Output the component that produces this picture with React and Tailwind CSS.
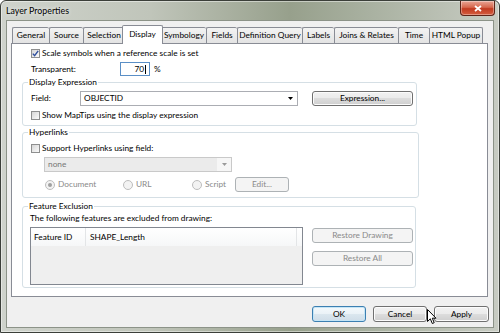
import React from "react";

const font = "font-['Lato',sans-serif]";

function Checkbox({ checked }) {
  return (
    <span className="flex h-[9px] w-[9px] shrink-0 items-center justify-center border border-[#8e8f8f] bg-[linear-gradient(135deg,#d6d6d6,#fbfbfb)]">
      {checked && (
        <svg width="7" height="7" viewBox="0 0 7 7">
          <path d="M0.8 3.6 L2.6 5.6 L6.2 0.8" fill="none" stroke="#2f4f9e" strokeWidth="1.4" />
        </svg>
      )}
    </span>
  );
}

function Radio({ checked }) {
  return (
    <span className="flex h-[10px] w-[10px] shrink-0 items-center justify-center rounded-full border border-[#bdbdbd] bg-[#f3f3f3]">
      {checked && <span className="h-[4px] w-[4px] rounded-full bg-[#a0a0a0]" />}
    </span>
  );
}

const btnBase =
  "flex items-center justify-center rounded-[3px] border border-[#707070] bg-[linear-gradient(#f2f2f2_0%,#ebebeb_50%,#dddddd_50%,#cfcfcf_100%)] shadow-[inset_0_0_0_1px_#fcfcfc]";
const btnDisabled =
  "flex items-center justify-center rounded-[3px] border border-[#adb2b5] bg-[#f4f4f4] text-[#8a8a8a]";

const tabs = [
  { label: "General", w: "w-[37px]" },
  { label: "Source", w: "w-[34px]" },
  { label: "Selection", w: "w-[41px]" },
  { label: "Display", w: "w-[41px]", sel: true },
  { label: "Symbology", w: "w-[45px]" },
  { label: "Fields", w: "w-[31px]" },
  { label: "Definition Query", w: "w-[65px]" },
  { label: "Labels", w: "w-[32px]" },
  { label: "Joins & Relates", w: "w-[64px]" },
  { label: "Time", w: "w-[31px]" },
  { label: "HTML Popup", w: "w-[54px]" },
];

export default function App() {
  return (
    <div className={`${font} relative h-[333px] w-[500px] overflow-hidden bg-white text-[8.3px] leading-none text-black`}>
      <div className="flex h-full w-full flex-col rounded-t-[6px] border border-[#3b3f39] bg-[linear-gradient(90deg,#cfd3cc_0%,#c0c5ba_30%,#97a08c_58%,#aab2a2_75%,#c8ccc3_100%)] shadow-[inset_0_0_0_1px_rgba(255,255,255,0.45)]">
        {/* title bar */}
        <div className="flex h-[20px] shrink-0 items-start justify-between">
          <span className="ml-[5px] mt-[6px] text-[8.8px] [text-shadow:0_0_4px_#fff]">Layer Properties</span>
          <div className="mr-[4px] flex h-[15px] w-[35px] items-center justify-center rounded-b-[4px] border border-t-0 border-[#5e2418] bg-[linear-gradient(#e9a595_0%,#d6684e_45%,#c13a20_55%,#d55e40_100%)] shadow-[inset_0_0_0_1px_rgba(255,255,255,0.35)]">
            <svg width="8" height="7" viewBox="0 0 8 7">
              <path d="M1 1 L7 6 M7 1 L1 6" stroke="white" strokeWidth="1.8" />
            </svg>
          </div>
        </div>

        {/* client area */}
        <div className="ml-[6px] flex h-[306px] w-[486px] shrink-0 flex-col bg-[#f0f0f0] shadow-[0_0_0_1px_#8c9388]">
          {/* tab row */}
          <div className="flex h-[22px] shrink-0 items-end pl-[5px]">
            {tabs.map((t, i) =>
              t.sel ? (
                <div
                  key={t.label}
                  className={`relative z-10 -mx-[2px] mb-[-1px] flex h-[19px] ${t.w} items-center justify-center rounded-t-[2px] border border-b-0 border-[#898c95] bg-white pb-[1px]`}
                >
                  {t.label}
                </div>
              ) : (
                <div
                  key={t.label}
                  className={`flex h-[16px] ${t.w} items-center justify-center rounded-t-[2px] border-t border-l ${
                    i === tabs.length - 1 ? "border-r" : ""
                  } border-[#898c95] bg-[linear-gradient(#f3f3f3,#e3e3e3)]`}
                >
                  {t.label}
                </div>
              )
            )}
          </div>

          {/* tab panel */}
          <div className="ml-[4px] flex h-[254px] w-[477px] shrink-0 flex-col border border-[#898c95] bg-white pl-[10px]">
            {/* scale symbols */}
            <div className="ml-[9px] mt-[3px] flex h-[12px] items-center gap-[2px]">
              <Checkbox checked />
              <span>Scale symbols when a reference scale is set</span>
            </div>
            {/* transparent */}
            <div className="ml-[9px] mt-[3px] flex h-[14px] items-center">
              <span className="w-[89px]">Transparent:</span>
              <div className="flex h-[14px] w-[30px] items-center justify-end border border-[#5b8fc6] pr-[3px]">
                <span>70</span>
                <span className="ml-[1px] h-[9px] w-px bg-black" />
              </div>
              <span className="ml-[4px]">%</span>
            </div>

            {/* Display Expression */}
            <fieldset className="w-[395px] rounded-[3px] border border-[#d5dfe5] p-0">
              <legend className="ml-[5px] px-[1px] leading-[12px]">Display Expression</legend>
              <div className="flex flex-col pb-[4px] pl-[8px] pt-[3px]">
                <div className="flex h-[15px] items-center">
                  <span className="w-[49px]">Field:</span>
                  <div className="flex h-[15px] w-[218px] items-center justify-between border border-[#abadb3] bg-white pl-[3px] pr-[4px]">
                    <span>OBJECTID</span>
                    <svg width="5" height="3" viewBox="0 0 5 3">
                      <path d="M0 0 H5 L2.5 3 Z" fill="#000" />
                    </svg>
                  </div>
                  <div className={`${btnBase} ml-[14px] h-[15px] w-[101px]`}>Expression...</div>
                </div>
                <div className="mt-[3px] flex h-[12px] items-center gap-[2px]">
                  <Checkbox />
                  <span>Show MapTips using the display expression</span>
                </div>
              </div>
            </fieldset>

            {/* Hyperlinks */}
            <fieldset className="w-[397px] rounded-[3px] border border-[#d5dfe5] p-0">
              <legend className="ml-[5px] px-[1px] leading-[12px]">Hyperlinks</legend>
              <div className="flex flex-col pb-[5px] pl-[8px] pt-[4px]">
                <div className="flex h-[12px] items-center gap-[2px]">
                  <Checkbox />
                  <span>Support Hyperlinks using field:</span>
                </div>
                <div className="ml-[13px] mt-[3px] flex h-[15px] w-[188px] items-center border border-[#c9c9c9] bg-[#ebebeb]">
                  <span className="flex-1 pl-[3px] text-[#777]">none</span>
                  <div className="flex h-full w-[14px] items-center justify-center bg-[#f6f6f6]">
                    <svg width="5" height="3" viewBox="0 0 5 3">
                      <path d="M0 0 H5 L2.5 3 Z" fill="#9a9a9a" />
                    </svg>
                  </div>
                </div>
                <div className="ml-[14px] mt-[5px] flex h-[15px] items-center text-[#8a8a8a]">
                  <div className="flex w-[78px] items-center gap-[3px]">
                    <Radio checked />
                    <span>Document</span>
                  </div>
                  <div className="flex w-[69px] items-center gap-[3px]">
                    <Radio />
                    <span>URL</span>
                  </div>
                  <div className="flex w-[43px] items-center gap-[3px]">
                    <Radio />
                    <span>Script</span>
                  </div>
                  <div className={`${btnDisabled} h-[15px] w-[54px]`}>Edit...</div>
                </div>
              </div>
            </fieldset>

            {/* Feature Exclusion */}
            <fieldset className="mt-[2px] w-[394px] rounded-[3px] border border-[#d5dfe5] p-0">
              <legend className="ml-[5px] px-[1px] leading-[12px]">Feature Exclusion</legend>
              <div className="flex flex-col pb-[2px] pl-[7px]">
                <div className="flex h-[12px] items-center">The following features are excluded from drawing:</div>
                <div className="mt-[3px] flex">
                  <div className="flex h-[58px] w-[273px] flex-col border border-[#828790] bg-[#efefef]">
                    <div className="flex h-[18px] shrink-0 bg-[linear-gradient(#ffffff,#f6f7f8)]">
                      <div className="flex w-[55px] items-center border-r border-[#e3e5e7] pl-[3px]">Feature ID</div>
                      <div className="flex w-[211px] items-center border-r border-[#e3e5e7] pl-[4px]">SHAPE_Length</div>
                      <div className="flex-1" />
                    </div>
                  </div>
                  <div className="ml-[9px] flex flex-col">
                    <div className={`${btnDisabled} mt-[1px] h-[15px] w-[101px]`}>Restore Drawing</div>
                    <div className={`${btnDisabled} mt-[8px] h-[15px] w-[101px]`}>Restore All</div>
                  </div>
                </div>
              </div>
            </fieldset>
          </div>

          {/* bottom buttons */}
          <div className="mt-[9px] flex justify-end gap-[7px] pr-[4px]">
            <div className="flex h-[16px] w-[54px] items-center justify-center rounded-[3px] border border-[#3c7fb1] bg-[linear-gradient(#f4f9fc_0%,#eaf2f7_50%,#dbe7ef_50%,#cfdde8_100%)] shadow-[inset_0_0_0_1px_#c4e5f6]">
              OK
            </div>
            <div className={`${btnBase} h-[16px] w-[54px]`}>Cancel</div>
            <div className={`${btnBase} h-[16px] w-[55px]`}>Apply</div>
          </div>
        </div>
      </div>

      {/* mouse cursor */}
      <svg className="absolute left-[427px] top-[309px]" width="10" height="16" viewBox="0 0 10 16">
        <path d="M0.5 0.5 V12.5 L3.3 9.8 L5.3 14.5 L7.2 13.7 L5.3 9.2 H9 Z" fill="#fff" stroke="#000" strokeWidth="1" strokeLinejoin="round" />
      </svg>
    </div>
  );
}
